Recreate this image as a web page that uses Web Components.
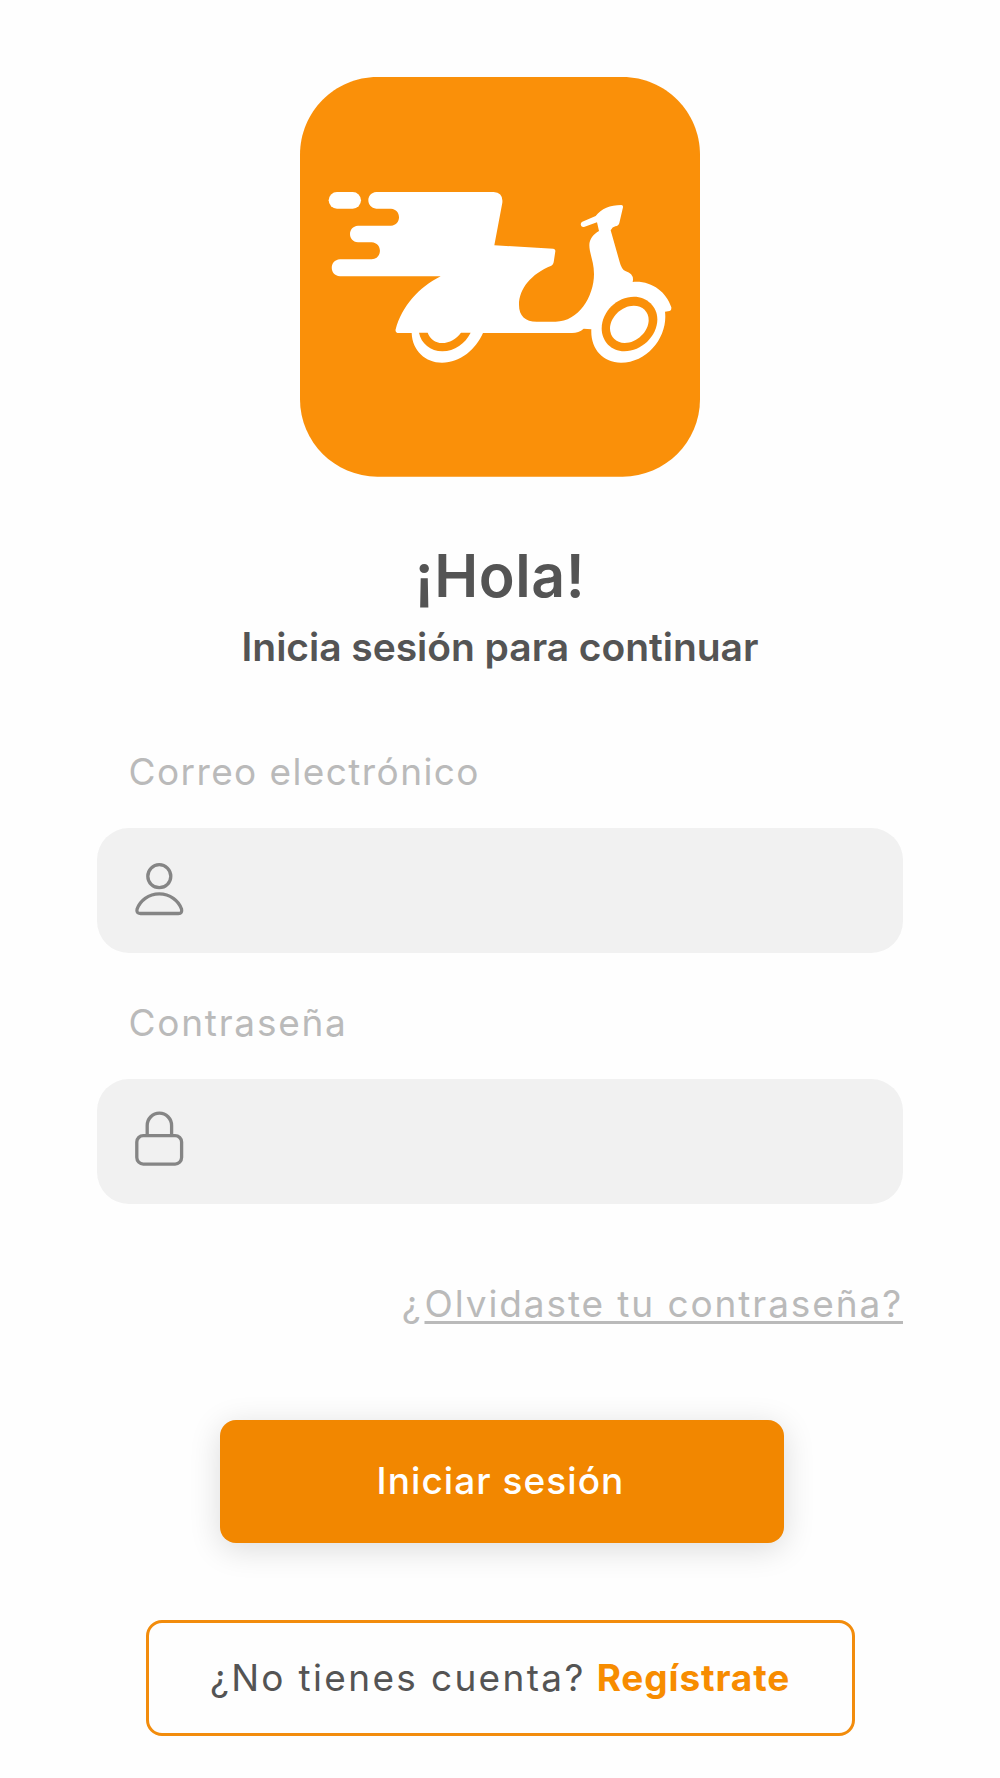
<!DOCTYPE html>
<html lang="es">
<head>
<meta charset="utf-8">
<title>Iniciar sesión</title>
<style>
    body{
        margin: 0;
        background-color: #fefefe;
        color: #545454;
        font-family: Inter, "Liberation Sans", sans-serif;
    }
</style>
</head>
<body>
<login-page></login-page>

<script>
class AppLogo extends HTMLElement{
    constructor(){
        super();
        this._shadowRoot = this.attachShadow({mode: "open"});
    }
    connectedCallback(){
        this.render();
    }
    render(){
        this._shadowRoot.innerHTML = `
        <style>
        :host{
            display: block;
            width: 400px;
            height: 400px;
        }
        svg{
            display: block;
        }
        </style>
        <svg width="400" height="400" viewBox="30 51 1200 1200">
            <path fill="#fa9009" d="M262 51H998C1126 51 1230 156 1230 284V1018C1230 1146 1126 1250 998 1250H262C134 1250 30 1146 30 1018V284C30 156 134 51 262 51Z"/>
            <rect x="116" y="396" width="97" height="50" rx="25" fill="#fff"/>
            <!-- box with speed lines, seat and body -->
            <path fill="#fff" d="M259 396H611Q640 398 637 428L613 556L790 566Q797 567 796 574L791 607Q790 614 784 617C724 641 687 686 687 734C687 768 706 785 740 785H797C866 785 912 709 912 642C912 605 898 580 898 556C898 538 910 522 927 513L921 487L882 501C873 503 868 491 877 485L917 468C934 446 960 435 994 435Q1000 436 999 442L988 489Q986 498 976 499Q967 501 962 511L989 606Q995 629 1006 633Q1034 642 1028 666C1083 661 1128 694 1144 742Q1145 753 1134 754L1125 755C1134 827 1076 907 993 908C938 908 901 865 904 808L881 806Q866 819 846 819H579C557 868 512 908 456 908C407 908 367 873 365 819H322Q315 816 317 808C336 739 386 682 452 649H150C117 647 117 600 150 598H245C278 596 278 549 245 547H204C172 545 172 499 204 497H303C335 495 335 448 303 446H259C227 444 227 398 259 396Z"/>
            <path fill="#fa9009" d="M387 818C393 850 422 874 457 874C494 874 526 850 542 818H513C499 836 479 849 456 849C436 849 420 837 413 818Z"/>
            <!-- front wheel -->
            <path fill="#fa9009" d="M1032 710C1071 710 1102 740 1102 778C1102 829 1054 874 1003 874C963 874 935 844 935 805C935 755 981 710 1032 710Z"/>
            <path fill="#fff" d="M1031 737C1058 737 1076 755 1076 780C1076 815 1040 849 1004 849C978 849 960 831 960 805C960 771 996 737 1031 737Z"/>
        </svg>`;
    }
}
customElements.define("app-logo", AppLogo);

class LoginField extends HTMLElement{
    constructor(){
        super();
        this._shadowRoot = this.attachShadow({mode: "open"});
    }
    connectedCallback(){
        this.render();
    }
    get value(){
        return this._shadowRoot.querySelector('input').value;
    }
    render(){
        const type = this.getAttribute('type') || 'text';
        this._shadowRoot.innerHTML = `
        <style>
        :host{
            display: block;
        }
        label{
            display: block;
            padding-left: 31.5px;
            margin-bottom: 34px;
            font-size: 37px;
            line-height: 44px;
            letter-spacing: var(--label-spacing, 1.5px);
            color: #bababa;
        }
        .box{
            display: flex;
            align-items: center;
            height: 125px;
            box-sizing: border-box;
            padding: 0 36px;
            border-radius: 32px;
            background-color: #f1f1f1;
        }
        input{
            flex: 1;
            min-width: 0;
            margin-left: 24px;
            border: 0;
            outline: 0;
            background: none;
            font: inherit;
            font-size: 36px;
        }
        </style>
        <label for="input"><slot></slot></label>
        <div class="box">
            <slot name="icon"></slot>
            <input id="input" type="${type}">
        </div>`;
    }
}
customElements.define("login-field", LoginField);

class FieldIcon extends HTMLElement{
    constructor(){
        super();
        this._shadowRoot = this.attachShadow({mode: "open"});
    }
    connectedCallback(){
        this.render();
    }
    render(){
        const shapes = {
            user: `<circle cx="26.3" cy="17.2" r="11.5"/>
                <path d="M26.3 34.9C15.5 34.9 7 41.7 4.1 50Q3 54.5 7.4 54.5H45.4Q49.6 54.5 48.5 50C45.6 41.7 37 34.9 26.3 34.9Z"/>`,
            lock: `<rect x="3.8" y="25.6" width="44.8" height="28.5" rx="6.5"/>
                <path d="M14.2 25.6V15.5A12.2 12.4 0 0 1 38.6 15.5V25.6"/>`
        };
        this._shadowRoot.innerHTML = `
        <style>
        :host{
            display: block;
            width: 52px;
            height: 64px;
        }
        svg{
            display: block;
            fill: none;
            stroke: #858585;
            stroke-width: 3.3;
        }
        </style>
        <svg width="52" height="64" viewBox="0 0 52 64">${shapes[this.getAttribute('name')]}</svg>`;
    }
}
customElements.define("field-icon", FieldIcon);

class LoginButton extends HTMLElement{
    constructor(){
        super();
        this._shadowRoot = this.attachShadow({mode: "open"});
    }
    connectedCallback(){
        this.render();
    }
    render(){
        this._shadowRoot.innerHTML = `
        <style>
        :host{
            display: block;
            width: 564px;
        }
        button{
            width: 100%;
            height: 123px;
            padding: 0 2px 2px 0;
            border: 0;
            border-radius: 16px;
            background-color: #f28700;
            box-shadow: 0 6px 32px rgba(0, 0, 0, 0.14);
            color: white;
            font-family: inherit;
            font-size: 37px;
            font-weight: 500;
            letter-spacing: 1.06px;
        }
        </style>
        <button type="button"><slot></slot></button>`;
    }
}
customElements.define("login-button", LoginButton);

class RegisterBox extends HTMLElement{
    constructor(){
        super();
        this._shadowRoot = this.attachShadow({mode: "open"});
    }
    connectedCallback(){
        this.render();
    }
    render(){
        this._shadowRoot.innerHTML = `
        <style>
        :host{
            display: flex;
            align-items: center;
            justify-content: center;
            gap: 11px;
            width: 709px;
            height: 116px;
            box-sizing: border-box;
            border: 3px solid #f28c0c;
            border-radius: 16px;
            font-size: 37px;
            line-height: 46px;
        }
        .question{
            letter-spacing: 2.33px;
        }
        a{
            color: #f78c00;
            font-weight: 700;
            letter-spacing: 0.86px;
            text-decoration: none;
        }
        </style>
        <span class="question"><slot></slot></span>
        <a href="#"><slot name="link"></slot></a>`;
    }
}
customElements.define("register-box", RegisterBox);

class LoginPage extends HTMLElement{
    constructor(){
        super();
        this._shadowRoot = this.attachShadow({mode: "open"});
    }
    connectedCallback(){
        this.render();
    }
    render(){
        this._shadowRoot.innerHTML = `
        <style>
        :host{
            display: flex;
            flex-direction: column;
            align-items: center;
            height: 1778px;
            box-sizing: border-box;
            padding-top: 77px;
        }
        h1{
            margin: 63px 0 0;
            font-size: 59px;
            font-weight: 600;
            line-height: 72px;
            letter-spacing: 0.56px;
        }
        h2{
            margin: 10px 0 0;
            font-size: 39px;
            font-weight: 600;
            line-height: 50px;
            letter-spacing: -0.04px;
        }
        form{
            display: flex;
            flex-direction: column;
            gap: 48px;
            width: 806px;
            margin-top: 78px;
        }
        .email{
            --label-spacing: 1.4px;
        }
        .password{
            --label-spacing: 1.75px;
        }
        .forgot{
            width: 806px;
            margin-top: 78px;
            text-align: right;
            font-size: 37px;
            line-height: 44px;
            letter-spacing: 1.9px;
            color: #bababa;
        }
        .forgot > a{
            margin-left: 2px;
            color: inherit;
            text-decoration: underline;
            text-decoration-thickness: 3px;
            text-decoration-skip-ink: none;
            text-underline-offset: 4px;
        }
        login-button{
            margin: 94px 0 77px 3px;
        }
        </style>
        <app-logo></app-logo>
        <h1>¡Hola!</h1>
        <h2>Inicia sesión para continuar</h2>
        <form>
            <login-field class="email" type="email">
                <field-icon slot="icon" name="user"></field-icon>Correo electrónico
            </login-field>
            <login-field class="password" type="password">
                <field-icon slot="icon" name="lock"></field-icon>Contraseña
            </login-field>
        </form>
        <div class="forgot">¿<a href="#">Olvidaste tu contraseña?</a></div>
        <login-button>Iniciar sesión</login-button>
        <register-box>¿No tienes cuenta?<span slot="link">Regístrate</span></register-box>`;
    }
}
customElements.define("login-page", LoginPage);
</script>
</body>
</html>
